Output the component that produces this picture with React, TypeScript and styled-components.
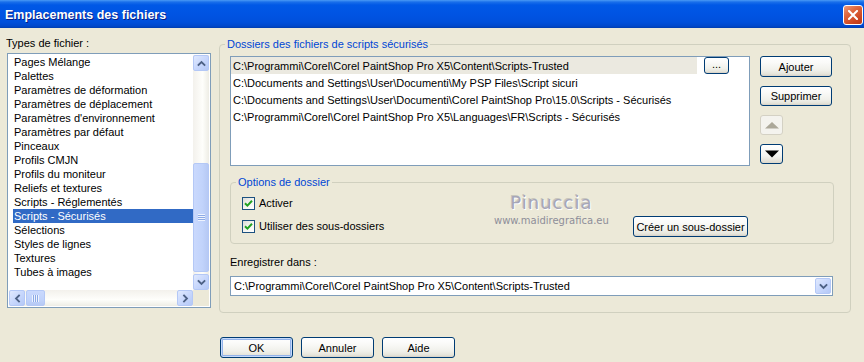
import styled, { createGlobalStyle } from "styled-components";

const GlobalStyle = createGlobalStyle`
  html, body {
    margin: 0;
    padding: 0;
    width: 864px;
    height: 362px;
    overflow: hidden;
    background: #ece9d8;
  }
  body {
    font-family: "Liberation Sans", Arial, sans-serif;
    font-size: 11px;
    color: #000;
  }
`;

const fileTypes = [
  "Pages Mélange",
  "Palettes",
  "Paramètres de déformation",
  "Paramètres de déplacement",
  "Paramètres d'environnement",
  "Paramètres par défaut",
  "Pinceaux",
  "Profils CMJN",
  "Profils du moniteur",
  "Reliefs et textures",
  "Scripts - Réglementés",
  "Scripts - Sécurisés",
  "Sélections",
  "Styles de lignes",
  "Textures",
  "Tubes à images",
];

const folders = [
  "C:\\Programmi\\Corel\\Corel PaintShop Pro X5\\Content\\Scripts-Trusted",
  "C:\\Documents and Settings\\User\\Documenti\\My PSP Files\\Script sicuri",
  "C:\\Documents and Settings\\User\\Documenti\\Corel PaintShop Pro\\15.0\\Scripts - Sécurisés",
  "C:\\Programmi\\Corel\\Corel PaintShop Pro X5\\Languages\\FR\\Scripts - Sécurisés",
];

const Window = styled.div`
  width: 864px;
  height: 362px;
  display: flex;
  flex-direction: column;
  background: #ece9d8;
  overflow: hidden;
`;

const TitleBar = styled.div`
  height: 28px;
  flex: none;
  display: flex;
  align-items: center;
  justify-content: space-between;
  padding: 0 1px 0 5px;
  box-sizing: border-box;
  background: linear-gradient(
    180deg,
    #4a9af5 0px,
    #1a6fea 2px,
    #0058e6 5px,
    #0054e3 14px,
    #0050dc 22px,
    #0048cc 26px,
    #003db0 28px
  );
`;

const Title = styled.span`
  font-family: "Liberation Sans", Arial, sans-serif;
  font-weight: bold;
  font-size: 12.5px;
  color: #fff;
  text-shadow: 1px 1px 0 #0a1e83;
  margin-top: 2px;
`;

const CloseButton = styled.div`
  width: 20px;
  height: 20px;
  box-sizing: border-box;
  border: 1px solid #fff;
  border-radius: 3px;
  background: linear-gradient(145deg, #eb9a7c 0%, #e0683f 35%, #cc4420 75%, #b9381a 100%);
  display: flex;
  align-items: center;
  justify-content: center;
  margin-top: 2px;
`;

const Content = styled.div`
  display: flex;
  flex-direction: column;
  padding: 8px 0 0 6px;
`;

const MainRow = styled.div`
  display: flex;
  align-items: flex-start;
`;

const LeftColumn = styled.div`
  width: 205px;
  display: flex;
  flex-direction: column;
`;

const Label = styled.div`
  line-height: 14px;
  height: 14px;
  white-space: nowrap;
`;

const ListBox = styled.div`
  margin: 3px 0 0 1px;
  width: 204px;
  height: 255px;
  box-sizing: border-box;
  border: 1px solid #7f9db9;
  background: #fff;
  display: grid;
  grid-template-columns: 1fr 16px;
  grid-template-rows: 1fr 16px;
  padding: 1px;
`;

const ListItems = styled.div`
  padding: 0 0 0 4px;
  overflow: hidden;
`;

const ListItem = styled.div<{ $selected?: boolean }>`
  height: 14px;
  line-height: 14px;
  padding-left: 1px;
  white-space: nowrap;
  background: ${(p) => (p.$selected ? "#316ac5" : "transparent")};
  color: ${(p) => (p.$selected ? "#fff" : "#000")};
`;

const VScroll = styled.div`
  display: flex;
  flex-direction: column;
  background: linear-gradient(90deg, #f3f1ec 0%, #fefefb 60%, #eeede5 100%);
`;

const HScroll = styled.div`
  display: flex;
  background: linear-gradient(180deg, #f3f1ec 0%, #fefefb 60%, #eeede5 100%);
`;

const ScrollArrow = styled.div`
  width: 16px;
  height: 16px;
  flex: none;
  box-sizing: border-box;
  border: 1px solid #b4c8f6;
  border-radius: 2px;
  background: linear-gradient(135deg, #e0e9fe 0%, #c6d6fc 55%, #b4c8f6 100%);
  display: flex;
  align-items: center;
  justify-content: center;
`;

const ScrollThumb = styled.div<{ $vertical?: boolean }>`
  box-sizing: border-box;
  border: 1px solid #b4c8f6;
  border-radius: 2px;
  background: ${(p) =>
    p.$vertical
      ? "linear-gradient(90deg, #cad9fd 0%, #c1d3fb 60%, #b6c9f4 100%)"
      : "linear-gradient(180deg, #cad9fd 0%, #c1d3fb 60%, #b6c9f4 100%)"};
  display: flex;
  align-items: center;
  justify-content: center;
  ${(p) =>
    p.$vertical
      ? "width: 16px; height: 109px; margin-top: auto; margin-bottom: 2px;"
      : "height: 16px; width: 19px; margin-left: 1px;"}
`;

const Grip = styled.div<{ $vertical?: boolean }>`
  ${(p) =>
    p.$vertical
      ? `width: 7px; height: 7px;
         background: repeating-linear-gradient(180deg, #eef3fe 0 1px, #8caae6 1px 2px);`
      : `width: 7px; height: 7px;
         background: repeating-linear-gradient(90deg, #eef3fe 0 1px, #8caae6 1px 2px);`}
`;

const Spacer = styled.div`
  flex: 1;
`;

const Corner = styled.div`
  background: #ece9d8;
`;

const GroupBox = styled.div`
  position: relative;
  margin: 8px 0 0 8px;
  width: 632px;
  height: 269px;
  box-sizing: border-box;
  border: 1px solid #d0d0bf;
  border-radius: 4px;
  padding: 11px 0 0 10px;
  display: flex;
  flex-direction: column;
`;

const Legend = styled.span`
  position: absolute;
  top: -7px;
  left: 5px;
  padding: 0 2px;
  line-height: 13px;
  background: #ece9d8;
  color: #0046d5;
  white-space: nowrap;
`;

const TopRow = styled.div`
  display: flex;
  gap: 10px;
`;

const PathList = styled.div`
  width: 520px;
  height: 110px;
  box-sizing: border-box;
  border: 1px solid #7f9db9;
  background: #fff;
  overflow: hidden;
`;

const PathRow = styled.div`
  display: flex;
  align-items: center;
  height: 17px;
`;

const PathCell = styled.div<{ $active?: boolean }>`
  height: 17px;
  line-height: 17px;
  padding: 1px 0 0 2px;
  white-space: nowrap;
  box-sizing: border-box;
  width: ${(p) => (p.$active ? "466px" : "auto")};
  background: ${(p) => (p.$active ? "#ebe9e0" : "transparent")};
`;

const XpButton = styled.div<{ $w: number; $h?: number; $default?: boolean }>`
  width: ${(p) => p.$w}px;
  height: ${(p) => p.$h ?? 21}px;
  flex: none;
  box-sizing: border-box;
  border: 1px solid #003c74;
  border-radius: 3px;
  background: linear-gradient(180deg, #ffffff 0%, #fafaf8 30%, #f0f0ea 70%, #e5e4da 90%, #d6d0c5 100%);
  display: flex;
  align-items: center;
  justify-content: center;
  white-space: nowrap;
  box-shadow: ${(p) => (p.$default ? "inset 0 0 0 1px #c6dafa, inset 0 0 0 2px #93b3ea" : "none")};
`;

const BrowseButton = styled(XpButton)`
  margin-left: 7px;
  line-height: 10px;
  padding-bottom: 3px;
`;

const SideButtons = styled.div`
  display: flex;
  flex-direction: column;
  gap: 9px;
`;

const ArrowButton = styled.div<{ $disabled?: boolean }>`
  width: 23px;
  height: 20px;
  box-sizing: border-box;
  border: 1px solid ${(p) => (p.$disabled ? "#d4d1c4" : "#003c74")};
  border-radius: 3px;
  background: ${(p) =>
    p.$disabled
      ? "#f4f3ee"
      : "linear-gradient(180deg, #ffffff 0%, #f4f4f0 60%, #dcd8cc 100%)"};
  display: flex;
  align-items: center;
  justify-content: center;
`;

const OptionsBox = styled.div`
  position: relative;
  margin-top: 16px;
  width: 604px;
  height: 62px;
  box-sizing: border-box;
  border: 1px solid #d0d0bf;
  border-radius: 4px;
  padding: 14px 0 0 11px;
  display: grid;
  grid-template-columns: 391px auto;
  grid-template-rows: 13px 21px;
  row-gap: 6px;
  align-items: center;
  justify-items: start;
`;

const CheckRow = styled.label`
  display: flex;
  align-items: center;
  gap: 4px;
  white-space: nowrap;
  line-height: 13px;
`;

const CheckBox = styled.span`
  width: 13px;
  height: 13px;
  box-sizing: border-box;
  border: 1px solid #1c5180;
  background: linear-gradient(135deg, #dcdcd7 0%, #f4f4f0 50%, #ffffff 100%);
  display: flex;
  align-items: center;
  justify-content: center;
`;

const Watermark = styled.div`
  position: absolute;
  left: 263px;
  top: 9px;
  display: flex;
  flex-direction: column;
  align-items: center;
  pointer-events: none;
`;

const WatermarkName = styled.span`
  font-family: "DejaVu Sans", sans-serif;
  font-size: 18px;
  line-height: 22px;
  letter-spacing: 1px;
  color: #a6a6b8;
  text-shadow: 1px 1px 0 #ffffff, -1px -1px 0 #c8c6bc;
`;

const WatermarkUrl = styled.span`
  font-family: "DejaVu Sans", sans-serif;
  font-size: 10px;
  line-height: 12px;
  color: #8e8e98;
  margin-top: 1px;
`;

const SaveLabel = styled(Label)`
  margin-top: 12px;
  line-height: 13px;
  height: 13px;
`;

const Combo = styled.div`
  margin-top: 7px;
  width: 603px;
  height: 20px;
  box-sizing: border-box;
  border: 1px solid #7f9db9;
  background: #fff;
  display: flex;
  align-items: center;
  padding: 1px;
`;

const ComboText = styled.span`
  flex: 1;
  padding-left: 2px;
  white-space: nowrap;
  overflow: hidden;
`;

const ComboButton = styled(ScrollArrow)`
  height: 16px;
`;

const Footer = styled.div`
  display: flex;
  gap: 8px;
  margin: 24px 0 0 214px;
`;

const Chevron = ({ dir }: { dir: "up" | "down" | "left" | "right" }) => {
  const d = {
    up: "M1.5 6 L4.5 3 L7.5 6",
    down: "M1.5 3 L4.5 6 L7.5 3",
    left: "M6 1.5 L3 4.5 L6 7.5",
    right: "M3 1.5 L6 4.5 L3 7.5",
  }[dir];
  return (
    <svg width="9" height="9" viewBox="0 0 9 9">
      <path d={d} fill="none" stroke="#4d6185" strokeWidth="1.8" strokeLinecap="square" />
    </svg>
  );
};

const Check = () => (
  <svg width="9" height="9" viewBox="0 0 9 9">
    <path d="M1 4.2 L3.4 6.6 L8 1.8" fill="none" stroke="#21a121" strokeWidth="2" />
  </svg>
);

export default function App() {
  return (
    <>
      <GlobalStyle />
      <Window>
        <TitleBar>
          <Title>Emplacements des fichiers</Title>
          <CloseButton>
            <svg width="10" height="10" viewBox="0 0 10 10">
              <path d="M1 1 L9 9 M9 1 L1 9" stroke="#fff" strokeWidth="2" strokeLinecap="square" />
            </svg>
          </CloseButton>
        </TitleBar>
        <Content>
          <MainRow>
            <LeftColumn>
              <Label>Types de fichier :</Label>
              <ListBox>
                <ListItems>
                  {fileTypes.map((t) => (
                    <ListItem key={t} $selected={t === "Scripts - Sécurisés"}>
                      {t}
                    </ListItem>
                  ))}
                </ListItems>
                <VScroll>
                  <ScrollArrow>
                    <Chevron dir="up" />
                  </ScrollArrow>
                  <ScrollThumb $vertical>
                    <Grip $vertical />
                  </ScrollThumb>
                  <ScrollArrow>
                    <Chevron dir="down" />
                  </ScrollArrow>
                </VScroll>
                <HScroll>
                  <ScrollArrow>
                    <Chevron dir="left" />
                  </ScrollArrow>
                  <ScrollThumb>
                    <Grip />
                  </ScrollThumb>
                  <Spacer />
                  <ScrollArrow>
                    <Chevron dir="right" />
                  </ScrollArrow>
                </HScroll>
                <Corner />
              </ListBox>
            </LeftColumn>

            <GroupBox>
              <Legend>Dossiers des fichiers de scripts sécurisés</Legend>
              <TopRow>
                <PathList>
                  {folders.map((f, i) => (
                    <PathRow key={f}>
                      <PathCell $active={i === 0}>{f}</PathCell>
                      {i === 0 && (
                        <BrowseButton $w={25} $h={17}>
                          ...
                        </BrowseButton>
                      )}
                    </PathRow>
                  ))}
                </PathList>
                <SideButtons>
                  <XpButton $w={72}>Ajouter</XpButton>
                  <XpButton $w={72} $h={20}>
                    Supprimer
                  </XpButton>
                  <ArrowButton $disabled>
                    <svg width="16" height="8" viewBox="0 0 16 8">
                      <polygon points="1,7.5 8,1 15,7.5" fill="#aca899" />
                    </svg>
                  </ArrowButton>
                  <ArrowButton>
                    <svg width="16" height="8" viewBox="0 0 16 8">
                      <polygon points="1,0.5 15,0.5 8,7.5" fill="#000" />
                    </svg>
                  </ArrowButton>
                </SideButtons>
              </TopRow>

              <OptionsBox>
                <Legend>Options de dossier</Legend>
                <CheckRow>
                  <CheckBox>
                    <Check />
                  </CheckBox>
                  Activer
                </CheckRow>
                <span />
                <CheckRow>
                  <CheckBox>
                    <Check />
                  </CheckBox>
                  Utiliser des sous-dossiers
                </CheckRow>
                <XpButton $w={115}>Créer un sous-dossier</XpButton>
                <Watermark>
                  <WatermarkName>Pinuccia</WatermarkName>
                  <WatermarkUrl>www.maidiregrafica.eu</WatermarkUrl>
                </Watermark>
              </OptionsBox>

              <SaveLabel>Enregistrer dans :</SaveLabel>
              <Combo>
                <ComboText>{folders[0]}</ComboText>
                <ComboButton>
                  <Chevron dir="down" />
                </ComboButton>
              </Combo>
            </GroupBox>
          </MainRow>

          <Footer>
            <XpButton $w={73} $default>
              OK
            </XpButton>
            <XpButton $w={73}>Annuler</XpButton>
            <XpButton $w={73}>Aide</XpButton>
          </Footer>
        </Content>
      </Window>
    </>
  );
}
